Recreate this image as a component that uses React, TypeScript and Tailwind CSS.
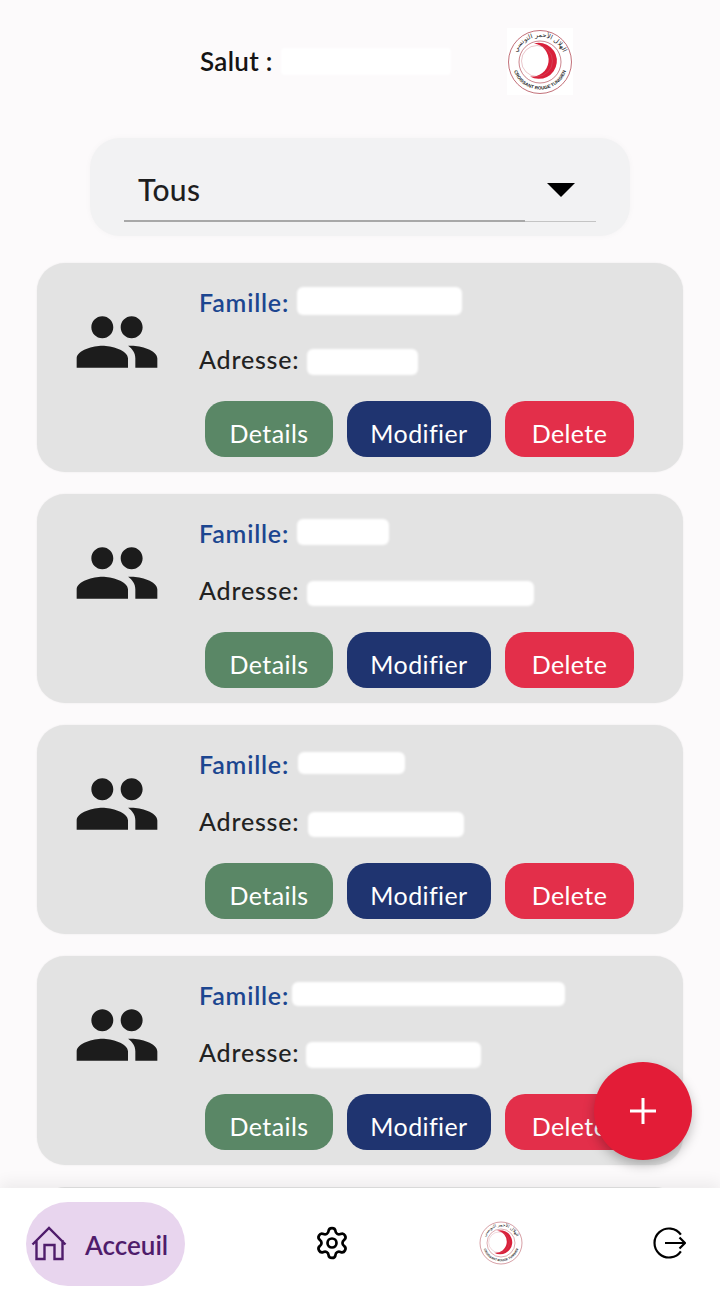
import { MdPeople } from "react-icons/md"
import { Settings } from "lucide-react"

type Famille = {
  nomClass: string
  adresseClass: string
}

const familles: Famille[] = [
  { nomClass: "ml-[8px] w-[165px] h-[28px] -mt-1", adresseClass: "ml-[8px] w-[111px] h-[26px] mt-1" },
  { nomClass: "ml-[8px] w-[92px] h-[26px] -mt-1", adresseClass: "ml-[8px] w-[227px] h-[25px] mt-1" },
  { nomClass: "ml-[9px] w-[107px] h-[22px] -mt-1", adresseClass: "ml-[9px] w-[156px] h-[25px] mt-1" },
  { nomClass: "ml-[3px] w-[273px] h-[24px] -mt-1", adresseClass: "ml-[7px] w-[175px] h-[26px] mt-1" },
]

const Logo = ({ id, className }: { id: string; className: string }) => (
  <svg viewBox="0 0 66 66" className={className}>
    <circle cx="33" cy="33" r="31.5" fill="#fff" stroke="#a8323f" strokeWidth="0.7" />
    <circle cx="33" cy="33" r="21" fill="#fff" stroke="#a8323f" strokeWidth="0.6" />
    <path d="M27 14.5A18 18 0 1 1 23 47.5A16 16 0 1 0 27 14.5Z" fill="#d9203a" />
    <circle cx="30" cy="32" r="15.5" fill="none" stroke="#c9707c" strokeWidth="0.4" />
    <path id={`${id}-haut`} d="M8 33A25 25 0 0 1 58 33" fill="none" />
    <path id={`${id}-bas`} d="M5.5 33A27.5 27.5 0 0 0 60.5 33" fill="none" />
    <text fontSize="6.5" fill="#222" fontFamily="'DejaVu Sans', sans-serif">
      <textPath href={`#${id}-haut`} startOffset="50%" textAnchor="middle">
        الهلال الأحمر التونسي
      </textPath>
    </text>
    <text fontSize="4.6" fontWeight="700" fill="#222" fontFamily="'Liberation Sans', sans-serif">
      <textPath href={`#${id}-bas`} startOffset="50%" textAnchor="middle">
        CROISSANT ROUGE TUNISIEN
      </textPath>
    </text>
  </svg>
)

const Carte = ({ nomClass, adresseClass }: Famille) => (
  <div className="flex h-[209px] shrink-0 rounded-[28px] bg-[#e3e3e3] pl-9 shadow-[0_0_2px_rgba(0,0,0,0.08)]">
    <MdPeople className="mt-[35px] shrink-0 text-[88px] text-[#1c1c1c]" />
    <div className="ml-[38px] pt-[25px]">
      <div className="flex h-[30px] items-center text-[25px] font-semibold tracking-[0.8px] text-[#1c4690]">
        <span>Famille:</span>
        <div className={`rounded-md bg-white blur-[1px] ${nomClass}`} />
      </div>
      <div className="mt-[27px] flex h-[30px] items-center text-[25px] font-medium tracking-[0.8px] text-[#222222]">
        <span>Adresse:</span>
        <div className={`rounded-md bg-white blur-[1px] ${adresseClass}`} />
      </div>
      <div className="ml-1.5 mt-[26px] flex gap-3.5 text-[25px] tracking-[0.4px] text-white">
        <button className="flex h-14 w-[128px] items-center justify-center rounded-[20px] bg-[#5a8766] pt-[10px]">Details</button>
        <button className="flex h-14 w-[144px] items-center justify-center rounded-[20px] bg-[#1f3470] pt-[10px]">Modifier</button>
        <button className="flex h-14 w-[129px] items-center justify-center rounded-[20px] bg-[#e32f4a] pt-[10px]">Delete</button>
      </div>
    </div>
  </div>
)

export default function App() {
  return (
    <div className="relative flex h-[1291px] w-[720px] flex-col overflow-hidden bg-[#fcfafb] font-['Lato',sans-serif]">
      <main className="flex min-h-0 flex-1 flex-col overflow-hidden">
        <header className="flex h-[138px] shrink-0 pl-[200px] pt-[28px]">
          <div className="flex h-[67px] w-[307px] items-center">
            <span className="text-[26px] font-semibold tracking-[0.3px] text-[#141414]">Salut :</span>
            <div className="ml-2 h-[27px] w-[170px] rounded bg-white blur-[1px]" />
          </div>
          <div className="flex h-[67px] w-[66px] items-center justify-center bg-white">
            <Logo id="entete" className="h-[66px] w-[66px]" />
          </div>
        </header>

        <div className="mx-[90px] h-[98px] shrink-0 rounded-[30px] bg-[#f2f2f3] px-[34px] shadow-[0_0_6px_rgba(0,0,0,0.03)]">
          <div className="relative flex h-[84px] items-center justify-between border-b border-[#c4c4c4] pl-[14px] pr-[21px] pt-[20px]">
            <span className="text-[30px] font-medium tracking-[0.3px] text-[#1e1e1e]">Tous</span>
            <div className="h-0 w-0 border-x-[14px] border-t-[14px] border-x-transparent border-t-black" />
            <div className="absolute -bottom-px left-0 h-[2px] w-[401px] bg-[#a8a8a8]" />
          </div>
        </div>

        <section className="mx-[37px] mt-[27px] flex flex-col gap-[22px]">
          {familles.map((famille, i) => (
            <Carte key={i} {...famille} />
          ))}
          <div className="h-[209px] shrink-0 rounded-[28px] bg-[#e3e3e3]" />
        </section>
      </main>

      <nav className="relative flex h-[103px] shrink-0 items-center bg-white pl-[26px] shadow-[0_-6px_14px_rgba(0,0,0,0.06)]">
        <div className="mt-[9px] flex h-[84px] w-[159px] items-center rounded-[42px] bg-[#e8d5ee] pl-[5px]">
          <svg viewBox="0 0 36 36" className="h-9 w-9 fill-none stroke-[#4f1c6b] stroke-[2.4]">
            <path d="M1.5 18.5L18 2L34.5 18.5M5.5 14V33H13.5V19H23.5V33H31.5V14" />
          </svg>
          <span className="ml-[18px] pt-[2px] text-[26px] font-semibold text-[#4f1c6b]">Acceuil</span>
        </div>
        <Settings className="ml-[129px] mt-[7px] h-9 w-9 text-black" strokeWidth={1.8} />
        <Logo id="menu" className="ml-[129px] mt-[7px] h-[44px] w-[44px]" />
        <svg viewBox="0 0 34 34" className="ml-[129px] mt-[7px] h-[34px] w-[34px] fill-none stroke-black stroke-[2.2]">
          <path d="M28.9 8.7A14.5 14.5 0 1 0 28.9 25.3M13 17H33M27.5 11.5L33 17L27.5 22.5" />
        </svg>
      </nav>

      <button className="absolute left-[594px] top-[1062px] flex h-[98px] w-[98px] items-center justify-center rounded-full bg-[#e31c37] shadow-[0_5px_12px_rgba(0,0,0,0.25)]">
        <svg viewBox="0 0 26 26" className="h-[26px] w-[26px] stroke-white stroke-[3]">
          <path d="M13 0V26M0 13H26" />
        </svg>
      </button>
    </div>
  )
}
